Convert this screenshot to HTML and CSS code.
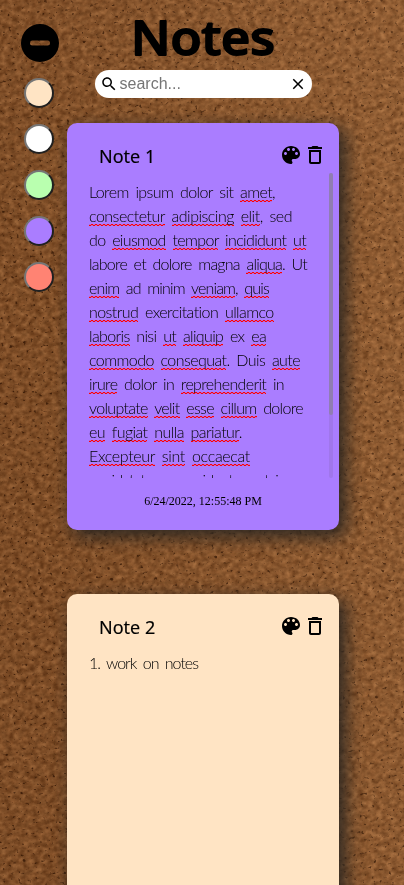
FILE: index.html
```html
<!DOCTYPE html>
<html lang="en">
<head>
<meta charset="utf-8">
<title>Notes</title>
<link rel="stylesheet" href="styles.css">
</head>
<body>
<svg class="cork" width="404" height="885" aria-hidden="true">
  <defs>
    <filter id="grain" x="0" y="0" width="100%" height="100%" color-interpolation-filters="sRGB">
      <feTurbulence type="fractalNoise" baseFrequency="0.173 0.211" numOctaves="4" seed="8"/>
      <feColorMatrix values="0.38 0.12 0 0 0.29  0.3 0.12 0 0 0.13  0.22 0.1 0 0 0.02  0 0 0 0 1"/>
    </filter>
    <filter id="specks" x="0" y="0" width="100%" height="100%" color-interpolation-filters="sRGB">
      <feTurbulence type="fractalNoise" baseFrequency="0.283 0.337" numOctaves="2" seed="31"/>
      <feColorMatrix values="0 0 0 0 0.2  0 0 0 0 0.09  0 0 0 0 0.02  0 7 0 0 -4.4"/>
    </filter>
    <linearGradient id="light" x1="0" y1="0.3" x2="1" y2="0">
      <stop offset="0" stop-color="#3a1700" stop-opacity=".16"/>
      <stop offset="1" stop-color="#c08a58" stop-opacity=".14"/>
    </linearGradient>
  </defs>
  <g transform="rotate(-17 202 442)">
    <rect x="-180" y="-60" width="770" height="1010" filter="url(#grain)"/>
    <rect x="-180" y="-60" width="770" height="1010" filter="url(#specks)" opacity=".8"/>
  </g>
  <rect width="404" height="885" fill="url(#light)"/>
</svg>

<svg class="symbols" aria-hidden="true">
  <symbol id="palette" viewBox="0 0 24 24"><path d="M12 3c-4.97 0-9 4.03-9 9s4.03 9 9 9c.83 0 1.5-.67 1.5-1.5 0-.39-.15-.74-.39-1.01-.23-.26-.38-.61-.38-.99 0-.83.67-1.5 1.5-1.5H16c2.76 0 5-2.24 5-5 0-4.42-4.03-8-9-8zm-5.5 9c-.83 0-1.5-.67-1.5-1.5S5.67 9 6.5 9 8 9.67 8 10.500 7.330 12 6.500 12zm3-4C8.670 8 8 7.330 8 6.500S8.670 5 9.500 5s1.500.670 1.500 1.500S10.330 8 9.500 8zm5 0c-.83 0-1.5-.67-1.5-1.5S13.670 5 14.500 5s1.500.670 1.500 1.500S15.330 8 14.500 8zm3 4c-.83 0-1.500-.67-1.500-1.500S16.670 9 17.500 9s1.500.670 1.500 1.500-.670 1.500-1.500 1.500z"/></symbol>
  <symbol id="trash" viewBox="0 0 24 24"><path d="M6 19c0 1.100.900 2 2 2h8c1.100 0 2-.900 2-2V7H6v12zM8 9h8v10H8V9zm7.500-5l-1-1h-5l-1 1H5v2h14V4z"/></symbol>
</svg>

<div class="app">
  <aside class="sidebar">
    <button class="toggle" aria-label="Close colours">
      <svg viewBox="0 0 38 38"><path fill-rule="evenodd" d="M19 0a19 19 0 1 0 0 38a19 19 0 1 0 0-38zM11.500 16.500h15a2.500 2.500 0 0 1 0 5h-15a2.500 2.500 0 0 1 0-5z"/></svg>
    </button>
    <button class="swatch bisque"></button>
    <button class="swatch white"></button>
    <button class="swatch green"></button>
    <button class="swatch purple"></button>
    <button class="swatch red"></button>
  </aside>

  <main class="board">
    <h1 class="title">
      <svg width="150" height="60"><text x="3" y="55" textLength="144" lengthAdjust="spacingAndGlyphs">Notes</text></svg>
    </h1>
    <div class="search">
      <svg viewBox="0 0 24 24"><path d="M15.500 14h-.790l-.280-.270C15.410 12.590 16 11.110 16 9.500 16 5.910 13.090 3 9.500 3S3 5.910 3 9.500 5.910 16 9.500 16c1.610 0 3.090-.590 4.230-1.570l.270.280v.790l5 4.990L20.490 19l-4.990-5zm-6 0C7.010 14 5 11.990 5 9.500S7.010 5 9.500 5 14 7.010 14 9.500 11.990 14 9.500 14z"/></svg>
      <input type="text" placeholder="search...">
      <svg viewBox="0 0 24 24"><path d="M19 6.410L17.590 5 12 10.590 6.410 5 5 6.410 10.590 12 5 17.590 6.410 19 12 13.410 17.590 19 19 17.590 13.410 12z"/></svg>
    </div>

    <article class="note purple">
      <header class="note-head">
        <h2>Note 1</h2>
        <svg class="icon"><use href="#palette"/></svg>
        <svg class="icon"><use href="#trash"/></svg>
      </header>
      <div class="note-body">
        <div class="note-text">
          <p data-width="186">Lorem ipsum dolor sit <u>amet</u>,</p>
          <p data-width="203"><u>consectetur</u> <u>adipiscing</u> <u>elit</u>, sed</p>
          <p data-width="217">do <u>eiusmod</u> <u>tempor</u> <u>incididunt</u> <u>ut</u></p>
          <p data-width="218">labore et dolore magna <u>aliqua</u>. Ut</p>
          <p data-width="180"><u>enim</u> ad minim <u>veniam</u>, <u>quis</u></p>
          <p data-width="185"><u>nostrud</u> exercitation <u>ullamco</u></p>
          <p data-width="177"><u>laboris</u> nisi <u>ut</u> <u>aliquip</u> ex <u>ea</u></p>
          <p data-width="211"><u>commodo</u> <u>consequat</u>. Duis <u>aute</u></p>
          <p data-width="195"><u>irure</u> dolor in <u>reprehenderit</u> in</p>
          <p data-width="214"><u>voluptate</u> <u>velit</u> <u>esse</u> <u>cillum</u> dolore</p>
          <p data-width="153"><u>eu</u> <u>fugiat</u> <u>nulla</u> <u>pariatur</u>.</p>
          <p data-width="161"><u>Excepteur</u> <u>sint</u> <u>occaecat</u></p>
          <p data-width="197"><u>cupidatat</u> non <u>proident</u>, <u>sunt</u> in</p>
        </div>
        <div class="track"><div class="thumb"></div></div>
      </div>
      <footer>6/24/2022, 12:55:48 PM</footer>
    </article>

    <article class="note bisque">
      <header class="note-head">
        <h2>Note 2</h2>
        <svg class="icon"><use href="#palette"/></svg>
        <svg class="icon"><use href="#trash"/></svg>
      </header>
      <div class="note-body">
        <div class="note-text">
          <p data-width="109">1. work on notes</p>
        </div>
      </div>
    </article>
  </main>
</div>
<script src="script.js"></script>
</body>
</html>
```
FILE: styles.css
```css
* { box-sizing: border-box; }
html { background: #7d4f28; }
body { margin: 0; height: 885px; overflow: hidden; }
.cork { position: fixed; inset: 0; z-index: -1; }
.symbols { position: absolute; width: 0; height: 0; }
.app { display: flex; height: 885px; overflow: hidden; }
button { padding: 0; background: none; border: 0; }

.sidebar { width: 67px; padding: 24px 0 0 21px; display: flex; flex-direction: column; flex-shrink: 0; }
.toggle { width: 38px; height: 38px; margin-bottom: 16px; }
.toggle svg { display: block; width: 38px; height: 38px; }
.swatch { width: 30px; height: 30px; margin: 0 0 16px 3px; border-radius: 50%; border: 2px solid; border-color: #767676 #212121 #212121 #767676; flex-shrink: 0; }

.bisque { background-color: #ffe4c4; }
.white { background-color: #fff; }
.green { background-color: #b9ffaf; }
.purple { background-color: #aa7dff; }
.red { background-color: #ff8373; }

.board { width: 272px; flex-shrink: 0; }
.title { margin: 0; height: 70px; padding-left: 61px; }
.title svg { display: block; overflow: visible; }
.title text { font: 500 48px "Noto Sans", sans-serif; stroke: #000; stroke-width: 2px; stroke-linejoin: round; }

.search { width: 217px; height: 28px; margin: 0 0 25px 27.500px; padding: 0 5px; display: flex; align-items: center; background: #fff; border-radius: 14px; }
.search svg { width: 18px; height: 18px; flex-shrink: 0; }
.search input { flex: 1; min-width: 0; padding: 0 0 0 2px; border: 0; outline: 0; font: 16px "Liberation Sans", sans-serif; }
.search input::placeholder { color: #757575; }

.note { height: 407px; margin-bottom: 64px; padding-top: 20px; border-radius: 10px; box-shadow: 6px 6px 18px 1px #2c2722; }
.note-head { height: 30px; padding: 0 12px 0 32px; display: flex; align-items: flex-start; }
.note-head h2 { flex: 1; margin: 0; font: 400 18px/26px "Noto Sans", sans-serif; -webkit-text-stroke: .15px #000; }
.icon { width: 24px; height: 24px; }
.note-body { height: 305px; padding: 0 6px 0 22px; display: flex; justify-content: space-between; overflow: hidden; }
.note-text { padding-top: 7px; }
.note-text p { width: max-content; margin: 0; font: 300 16px/24px Lato, sans-serif; color: #000; white-space: nowrap; word-spacing: 3px; }
.note-text u {
  padding-bottom: 1px;
  text-decoration: none;
  background:
    linear-gradient(90deg, #f00 0 50%, #f003 50%) 0 100% / 4px 1px repeat-x,
    linear-gradient(90deg, #f003 0 50%, #f00 50%) 0 calc(100% - 1px) / 4px 1px repeat-x;
}
.track { width: 4px; height: 305px; border-radius: 2px; background: #a076eb; }
.thumb { height: 242px; border-radius: 2px; background: #907db2; }
.note footer { height: 46px; text-align: center; font: 12px/46px "Liberation Serif", serif; }
```
FILE: script.js
```js
document.querySelectorAll('.note-text p').forEach(function (line) {
  var slack = Number(line.dataset.width) - line.getBoundingClientRect().width;
  line.style.letterSpacing = slack / line.textContent.length + 'px';
});
```
